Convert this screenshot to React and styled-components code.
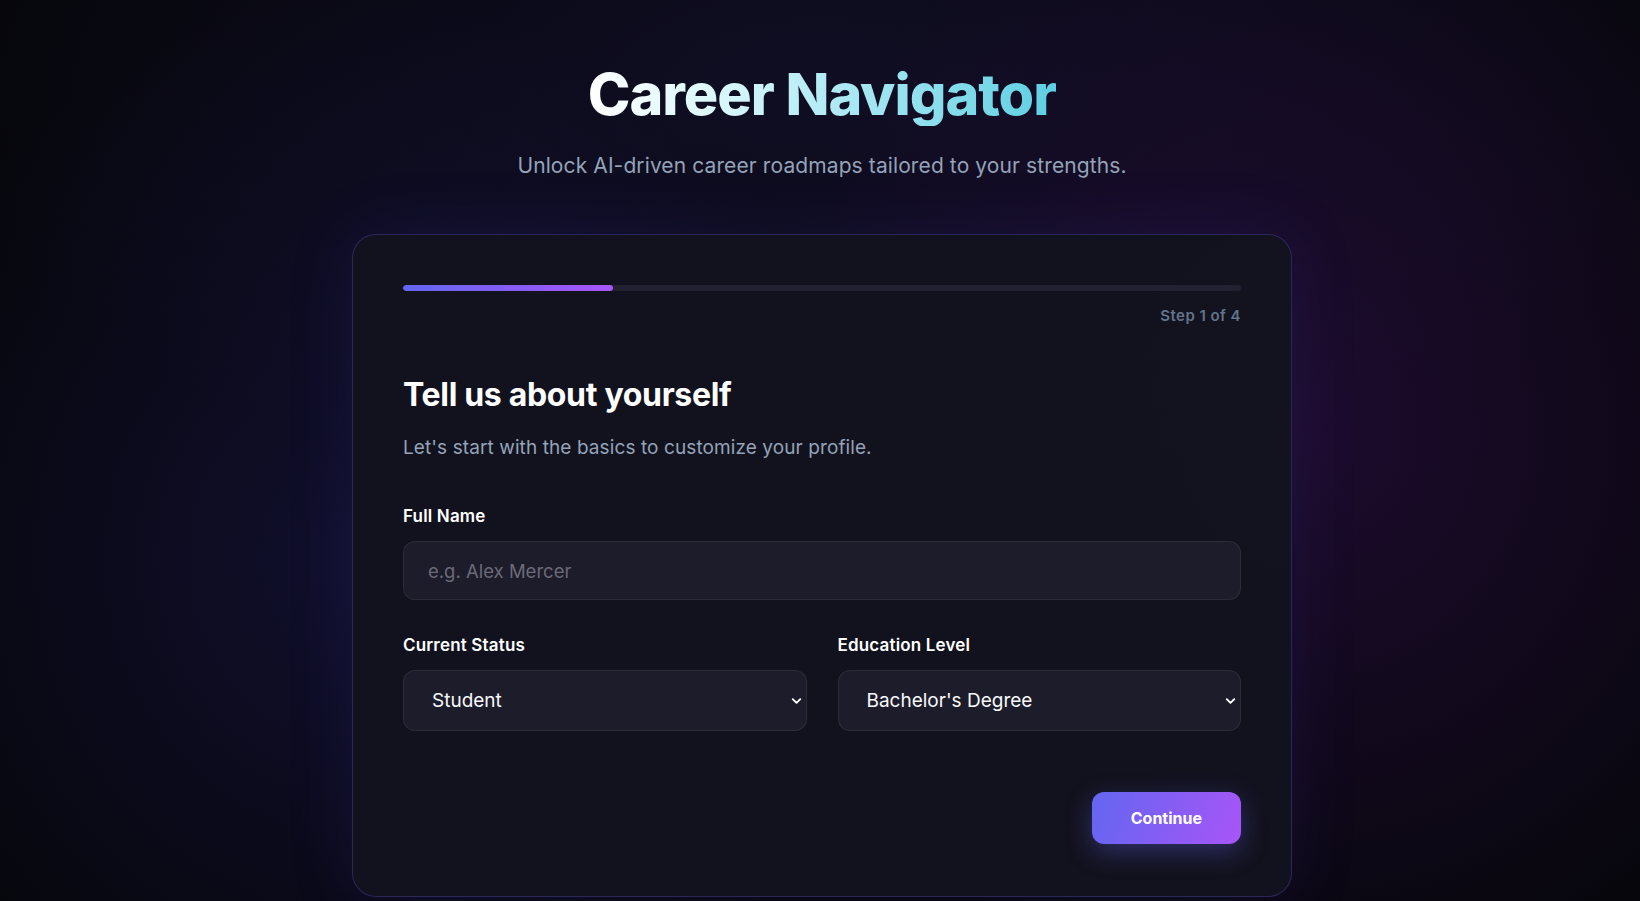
import React from 'react';
import styled, { createGlobalStyle } from 'styled-components';
import { ChevronDown } from 'lucide-react';

const GlobalStyle = createGlobalStyle`
  * {
    box-sizing: border-box;
  }

  html,
  body {
    margin: 0;
    min-height: 100%;
  }

  body {
    font-family: Inter, 'Noto Sans', 'Liberation Sans', sans-serif;
    color: #f8fafc;
    background:
      radial-gradient(ellipse 520px 560px at 22% 62%, rgba(32, 28, 92, 0.42), transparent 100%),
      radial-gradient(ellipse 560px 600px at 80% 48%, rgba(48, 16, 74, 0.55), transparent 100%),
      radial-gradient(ellipse 900px 420px at 50% 10%, rgba(24, 20, 56, 0.55), transparent 100%),
      #06060b;
    -webkit-font-smoothing: antialiased;
  }
`;

const progress = 25;

export default function App() {
  const handleSubmit = (event) => {
    event.preventDefault();
  };

  return (
    <>
      <GlobalStyle />
      <Page>
        <Header>
          <Title>Career Navigator</Title>
          <Tagline>Unlock AI-driven career roadmaps tailored to your strengths.</Tagline>
        </Header>

        <Card onSubmit={handleSubmit}>
          <ProgressTrack>
            <ProgressFill style={{ width: `${progress}%` }} />
          </ProgressTrack>
          <StepText>Step 1 of 4</StepText>

          <StepTitle>Tell us about yourself</StepTitle>
          <StepHint>Let's start with the basics to customize your profile.</StepHint>

          <Field>
            <Label htmlFor="fullName">Full Name</Label>
            <TextInput id="fullName" type="text" placeholder="e.g. Alex Mercer" />
          </Field>

          <FieldRow>
            <Field>
              <Label htmlFor="status">Current Status</Label>
              <SelectWrap>
                <Select id="status" defaultValue="student">
                  <option value="student">Student</option>
                  <option value="employed">Employed</option>
                  <option value="seeking">Job Seeking</option>
                </Select>
                <Chevron size={15} strokeWidth={3} />
              </SelectWrap>
            </Field>
            <Field>
              <Label htmlFor="education">Education Level</Label>
              <SelectWrap>
                <Select id="education" defaultValue="bachelor">
                  <option value="highschool">High School</option>
                  <option value="bachelor">Bachelor's Degree</option>
                  <option value="master">Master's Degree</option>
                </Select>
                <Chevron size={15} strokeWidth={3} />
              </SelectWrap>
            </Field>
          </FieldRow>

          <Actions>
            <ContinueButton type="submit">Continue</ContinueButton>
          </Actions>
        </Card>
      </Page>
    </>
  );
}

const Page = styled.main`
  min-height: 100vh;
  display: flex;
  flex-direction: column;
  align-items: center;
  padding: 62px 24px 2px 28px;
`;

const Header = styled.header`
  display: flex;
  flex-direction: column;
  align-items: center;
  margin-bottom: 53px;
`;

const Title = styled.h1`
  margin: 0;
  font-size: 57.5px;
  line-height: 64px;
  font-weight: 800;
  letter-spacing: -0.018em;
  background: linear-gradient(90deg, #ffffff 0%, #d6f6fb 30%, #a3e6f2 60%, #5dcfe2 100%);
  -webkit-background-clip: text;
  background-clip: text;
  color: transparent;
`;

const Tagline = styled.p`
  margin: 25px 0 0;
  font-size: 21px;
  line-height: 30px;
  letter-spacing: 0.005em;
  color: #94a3b8;
`;

const Card = styled.form`
  width: 940px;
  padding: 50px 50px 52px;
  background: rgba(19, 19, 31, 0.96);
  border: 1px solid rgba(88, 80, 200, 0.35);
  border-radius: 24px;
  box-shadow: 0 0 70px rgba(79, 70, 229, 0.12);
  display: flex;
  flex-direction: column;
`;

const ProgressTrack = styled.div`
  height: 6px;
  border-radius: 3px;
  background: #222131;
  overflow: hidden;
`;

const ProgressFill = styled.div`
  height: 100%;
  border-radius: 3px;
  background: linear-gradient(90deg, #6366f1, #a855f7);
`;

const StepText = styled.div`
  margin-top: 15px;
  align-self: flex-end;
  font-size: 15px;
  line-height: 20px;
  font-weight: 600;
  letter-spacing: 0.03em;
  color: #64748b;
`;

const StepTitle = styled.h2`
  margin: 51px 0 0;
  font-size: 32px;
  line-height: 36px;
  font-weight: 700;
  letter-spacing: -0.01em;
  color: #ffffff;
`;

const StepHint = styled.p`
  margin: 21px 0 0;
  font-size: 19px;
  line-height: 27px;
  letter-spacing: 0.005em;
  color: #94a3b8;
`;

const Field = styled.div`
  display: flex;
  flex-direction: column;
  gap: 13px;
  margin-top: 43px;
  flex: 1;
  min-width: 0;
`;

const FieldRow = styled.div`
  display: flex;
  gap: 31px;
  margin-top: 33px;

  ${Field} {
    margin-top: 0;
  }
`;

const Label = styled.label`
  font-size: 17px;
  line-height: 24px;
  font-weight: 600;
  letter-spacing: 0.01em;
  color: #ffffff;
`;

const controlBase = `
  width: 100%;
  border-radius: 12px;
  border: 1px solid rgba(255, 255, 255, 0.07);
  background: #1d1c2b;
  font-family: Inter, 'Noto Sans', 'Liberation Sans', sans-serif;
  color: #f8fafc;
  outline: none;
`;

const TextInput = styled.input`
  ${controlBase}
  height: 59px;
  padding: 0 24px;
  font-size: 18.5px;

  &::placeholder {
    color: #6b6b78;
  }
`;

const SelectWrap = styled.div`
  position: relative;
`;

const Select = styled.select`
  ${controlBase}
  appearance: none;
  height: 61px;
  padding: 0 40px 0 28px;
  font-size: 19px;
  cursor: pointer;

  option {
    background: #1d1c2b;
  }
`;

const Chevron = styled(ChevronDown)`
  position: absolute;
  right: 3px;
  top: 50%;
  transform: translateY(-50%);
  color: #ffffff;
  pointer-events: none;
`;

const Actions = styled.div`
  display: flex;
  justify-content: flex-end;
  margin-top: 61px;
`;

const ContinueButton = styled.button`
  height: 52px;
  padding: 0 39px;
  border: none;
  border-radius: 12px;
  background: linear-gradient(110deg, #6366f1 0%, #a855f7 100%);
  box-shadow: 0 8px 26px rgba(99, 102, 241, 0.35);
  font-family: Inter, 'Noto Sans', 'Liberation Sans', sans-serif;
  font-size: 16px;
  font-weight: 700;
  color: #ffffff;
  cursor: pointer;
`;
